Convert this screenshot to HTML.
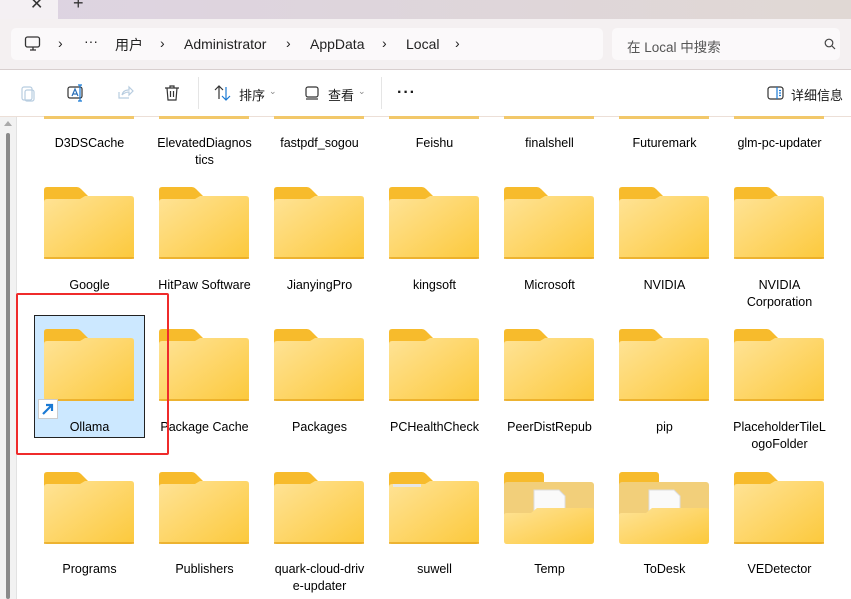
<!DOCTYPE html>
<html><head><meta charset="utf-8"><style>
*{margin:0;padding:0;box-sizing:border-box}
body{width:851px;height:599px;overflow:hidden;background:#fff;font-family:"Liberation Sans","Noto Sans CJK SC",sans-serif;position:relative;color:#1a1a1a}
.a{position:absolute}
.lbl{position:absolute;width:115px;text-align:center;font-size:12.5px;line-height:17px;color:#000}
</style></head><body>
<svg width="0" height="0" style="position:absolute"><defs>
<linearGradient id="g" x1="0" y1="0" x2="1" y2="1"><stop offset="0" stop-color="#ffe396"/><stop offset="1" stop-color="#fcc93c"/></linearGradient>
<symbol id="f" viewBox="0 0 90 72"><path d="M3 0h29c3 0 4 1 6 3l6 6v9H0V3q0-3 3-3z" fill="#f7bb2c"/><path d="M0 15q0-3 3-3h33l5-3h46q3 0 3 3v57q0 3-3 3H3q-3 0-3-3z" fill="url(#g)"/><path d="M0 71h90" stroke="#e8a820" stroke-width="1.5"/></symbol>
<symbol id="fd" viewBox="0 0 90 72"><rect x="0" y="0" width="40" height="16" rx="3" fill="#f7bb2c"/><rect x="0" y="10" width="90" height="60" rx="3" fill="#f2cf7a"/><path d="M30 18h25l6 6v26H30z" fill="#fafafa" stroke="#ddd"/><path d="M0 43q0-2 3-2h24l6-5h54q3 0 3 3v30q0 3-3 3H3q-3 0-3-3z" fill="url(#g)"/></symbol>
</defs></svg>

<div class="a" style="left:0;top:0;width:851px;height:20px;background:linear-gradient(90deg,#ddd3e2,#e0d8d4)"></div>
<div class="a" style="left:0;top:0;width:58px;height:20px;background:#f4f0f3"></div>
<div class="a" style="left:30px;top:-6px;font-size:16px;color:#333">✕</div>
<div class="a" style="left:73px;top:-7px;font-size:18px;color:#333">+</div>
<div class="a" style="left:0;top:19px;width:851px;height:51px;background:#f4f0f1;border-bottom:1px solid #d8cfcf"></div>
<div class="a" style="left:11px;top:28px;width:592px;height:32px;background:#fbf9fa;border-radius:5px"></div>
<div class="a" style="left:612px;top:28px;width:228px;height:32px;background:#fbf9fa;border-radius:5px"></div>
<svg class="a" style="left:24px;top:35px" width="18" height="18" viewBox="0 0 18 18" fill="none" stroke="#333" stroke-width="1.3"><rect x="1.5" y="2" width="14" height="10" rx="2"/><path d="M6 15h6M9 12v3"/></svg>
<div class="a" style="top:35px;left:58px;font-size:14px;color:#222">›</div>
<div class="a" style="top:33px;left:84px;font-size:14px;color:#222">···</div>
<div class="a" style="top:35px;left:115px;font-size:14px;color:#222">用户</div>
<div class="a" style="top:35px;left:160px;font-size:14px;color:#222">›</div>
<div class="a" style="top:36px;left:184px;font-size:14px;color:#222">Administrator</div>
<div class="a" style="top:35px;left:286px;font-size:14px;color:#222">›</div>
<div class="a" style="top:36px;left:310px;font-size:14px;color:#222">AppData</div>
<div class="a" style="top:35px;left:382px;font-size:14px;color:#222">›</div>
<div class="a" style="top:36px;left:406px;font-size:14px;color:#222">Local</div>
<div class="a" style="top:35px;left:455px;font-size:14px;color:#222">›</div>
<div class="a" style="top:36px;left:627px;font-size:13.5px;color:#555">在 Local 中搜索</div>
<svg class="a" style="left:824px;top:38px" width="12" height="12" viewBox="0 0 12 12" fill="none" stroke="#444" stroke-width="1.2"><circle cx="5" cy="5" r="3.8"/><path d="M8 8l3 3"/></svg>

<svg class="a" style="left:20px;top:84px" width="18" height="18" viewBox="0 0 18 18" fill="none" stroke="#b8cde0" stroke-width="1.2"><rect x="2" y="3" width="10" height="13" rx="2"/><rect x="5" y="6" width="9" height="11" rx="2"/></svg>
<svg class="a" style="left:66px;top:84px" width="20" height="18" viewBox="0 0 20 18" fill="none" stroke="#2a6fb8" stroke-width="1.2"><rect x="2" y="3" width="14" height="11" rx="2" stroke="#333"/><path d="M6 12l3-7 3 7M7 10h4"/><path d="M14 1v16M12 1h4M12 17h4" stroke="#1a7ad4"/></svg>
<svg class="a" style="left:116px;top:84px" width="18" height="18" viewBox="0 0 18 18" fill="none" stroke="#b8cde0" stroke-width="1.2"><path d="M3 8v6h10M6 11q1-5 7-5V3l4 4-4 4V8q-4 0-7 3"/></svg>
<svg class="a" style="left:163px;top:84px" width="18" height="18" viewBox="0 0 18 18" fill="none" stroke="#333" stroke-width="1.2"><path d="M2 4h14M7 4V2h4v2M4 4l1 12h8l1-12M7.5 7v6M10.5 7v6"/></svg>
<div class="a" style="left:198px;top:77px;width:1px;height:32px;background:#e5e5e5"></div>
<svg class="a" style="left:214px;top:84px" width="18" height="18" viewBox="0 0 18 18" fill="none" stroke-width="1.2"><path d="M5 15V2M1 6l4-4 4 4" stroke="#333"/><path d="M12 3v13M8 12l4 4 4-4" stroke="#1a7ad4"/></svg>
<div class="a" style="left:239px;top:85px;font-size:13px">排序</div>
<div class="a" style="left:269px;top:86px;font-size:9px;color:#888">⌄</div>
<svg class="a" style="left:304px;top:85px" width="16" height="16" viewBox="0 0 16 16" fill="none" stroke="#333" stroke-width="1.2"><rect x="2" y="2" width="12" height="10" rx="2"/><path d="M2 14h12"/></svg>
<div class="a" style="left:328px;top:85px;font-size:13px">查看</div>
<div class="a" style="left:358px;top:86px;font-size:9px;color:#888">⌄</div>
<div class="a" style="left:381px;top:77px;width:1px;height:32px;background:#e5e5e5"></div>
<div class="a" style="left:397px;top:84px;font-size:16px;font-weight:bold;letter-spacing:1px">···</div>
<svg class="a" style="left:767px;top:86px" width="17" height="14" viewBox="0 0 17 14" fill="none" stroke-width="1.2"><rect x="1" y="1" width="15" height="12" rx="2.5" stroke="#333"/><path d="M10 1v12M12 4.5h2M12 7h2M12 9.5h2" stroke="#1a7ad4"/></svg>
<div class="a" style="left:791px;top:85px;font-size:13px">详细信息</div>
<div class="a" style="left:0;top:116px;width:851px;height:1px;background:#ecdfd7"></div>

<div class="a" style="left:0;top:117px;width:17px;height:482px;background:#f2f2f2;border-right:1px solid #e2e2e2"></div>
<div class="a" style="left:4px;top:121px;width:0;height:0;border-left:4px solid transparent;border-right:4px solid transparent;border-bottom:5px solid #aaa"></div>
<div class="a" style="left:6px;top:133px;width:4px;height:466px;background:#8a8a8a;border-radius:2px"></div>

<div class="a" style="left:44px;top:116px;width:90px;height:3px;background:#f2c86a"></div>
<div class="a" style="left:159px;top:116px;width:90px;height:3px;background:#f2c86a"></div>
<div class="a" style="left:274px;top:116px;width:90px;height:3px;background:#f2c86a"></div>
<div class="a" style="left:389px;top:116px;width:90px;height:3px;background:#f2c86a"></div>
<div class="a" style="left:504px;top:116px;width:90px;height:3px;background:#f2c86a"></div>
<div class="a" style="left:619px;top:116px;width:90px;height:3px;background:#f2c86a"></div>
<div class="a" style="left:734px;top:116px;width:90px;height:3px;background:#f2c86a"></div>

<div class="lbl" style="left:32px;top:135px">D3DSCache</div>
<div class="lbl" style="left:147px;top:135px">ElevatedDiagnos<br>tics</div>
<div class="lbl" style="left:262px;top:135px">fastpdf_sogou</div>
<div class="lbl" style="left:377px;top:135px">Feishu</div>
<div class="lbl" style="left:492px;top:135px">finalshell</div>
<div class="lbl" style="left:607px;top:135px">Futuremark</div>
<div class="lbl" style="left:722px;top:135px">glm-pc-updater</div>

<div class="a" style="left:34px;top:315px;width:111px;height:123px;background:#cce8ff;border:1px solid #222"></div>

<svg class="a" style="left:44px;top:187px" width="90" height="72"><use href="#f"/></svg>
<svg class="a" style="left:159px;top:187px" width="90" height="72"><use href="#f"/></svg>
<svg class="a" style="left:274px;top:187px" width="90" height="72"><use href="#f"/></svg>
<svg class="a" style="left:389px;top:187px" width="90" height="72"><use href="#f"/></svg>
<svg class="a" style="left:504px;top:187px" width="90" height="72"><use href="#f"/></svg>
<svg class="a" style="left:619px;top:187px" width="90" height="72"><use href="#f"/></svg>
<svg class="a" style="left:734px;top:187px" width="90" height="72"><use href="#f"/></svg>
<div class="lbl" style="left:32px;top:277px">Google</div>
<div class="lbl" style="left:147px;top:277px">HitPaw Software</div>
<div class="lbl" style="left:262px;top:277px">JianyingPro</div>
<div class="lbl" style="left:377px;top:277px">kingsoft</div>
<div class="lbl" style="left:492px;top:277px">Microsoft</div>
<div class="lbl" style="left:607px;top:277px">NVIDIA</div>
<div class="lbl" style="left:722px;top:277px">NVIDIA<br>Corporation</div>

<svg class="a" style="left:44px;top:329px" width="90" height="72"><use href="#f"/></svg>
<svg class="a" style="left:159px;top:329px" width="90" height="72"><use href="#f"/></svg>
<svg class="a" style="left:274px;top:329px" width="90" height="72"><use href="#f"/></svg>
<svg class="a" style="left:389px;top:329px" width="90" height="72"><use href="#f"/></svg>
<svg class="a" style="left:504px;top:329px" width="90" height="72"><use href="#f"/></svg>
<svg class="a" style="left:619px;top:329px" width="90" height="72"><use href="#f"/></svg>
<svg class="a" style="left:734px;top:329px" width="90" height="72"><use href="#f"/></svg>
<svg class="a" style="left:38px;top:399px" width="20" height="20" viewBox="0 0 20 20"><rect x="0.5" y="0.5" width="19" height="19" fill="#fff" stroke="#ccc"/><path d="M5 15L14 6M8 6h6v6" fill="none" stroke="#1a7ad4" stroke-width="2.2"/></svg>
<div class="lbl" style="left:32px;top:419px">Ollama</div>
<div class="lbl" style="left:147px;top:419px">Package Cache</div>
<div class="lbl" style="left:262px;top:419px">Packages</div>
<div class="lbl" style="left:377px;top:419px">PCHealthCheck</div>
<div class="lbl" style="left:492px;top:419px">PeerDistRepub</div>
<div class="lbl" style="left:607px;top:419px">pip</div>
<div class="lbl" style="left:722px;top:419px">PlaceholderTileL<br>ogoFolder</div>

<svg class="a" style="left:44px;top:472px" width="90" height="72"><use href="#f"/></svg>
<svg class="a" style="left:159px;top:472px" width="90" height="72"><use href="#f"/></svg>
<svg class="a" style="left:274px;top:472px" width="90" height="72"><use href="#f"/></svg>
<svg class="a" style="left:389px;top:472px" width="90" height="72"><use href="#f"/></svg>
<div class="a" style="left:393px;top:484px;width:28px;height:3px;background:#e6e6e6"></div>
<svg class="a" style="left:504px;top:472px" width="90" height="72"><use href="#fd"/></svg>
<svg class="a" style="left:619px;top:472px" width="90" height="72"><use href="#fd"/></svg>
<svg class="a" style="left:734px;top:472px" width="90" height="72"><use href="#f"/></svg>
<div class="lbl" style="left:32px;top:561px">Programs</div>
<div class="lbl" style="left:147px;top:561px">Publishers</div>
<div class="lbl" style="left:262px;top:561px">quark-cloud-driv<br>e-updater</div>
<div class="lbl" style="left:377px;top:561px">suwell</div>
<div class="lbl" style="left:492px;top:561px">Temp</div>
<div class="lbl" style="left:607px;top:561px">ToDesk</div>
<div class="lbl" style="left:722px;top:561px">VEDetector</div>

<div class="a" style="left:16px;top:293px;width:153px;height:162px;border:2.5px solid #ef2b2b;border-radius:2px"></div>
</body></html>
